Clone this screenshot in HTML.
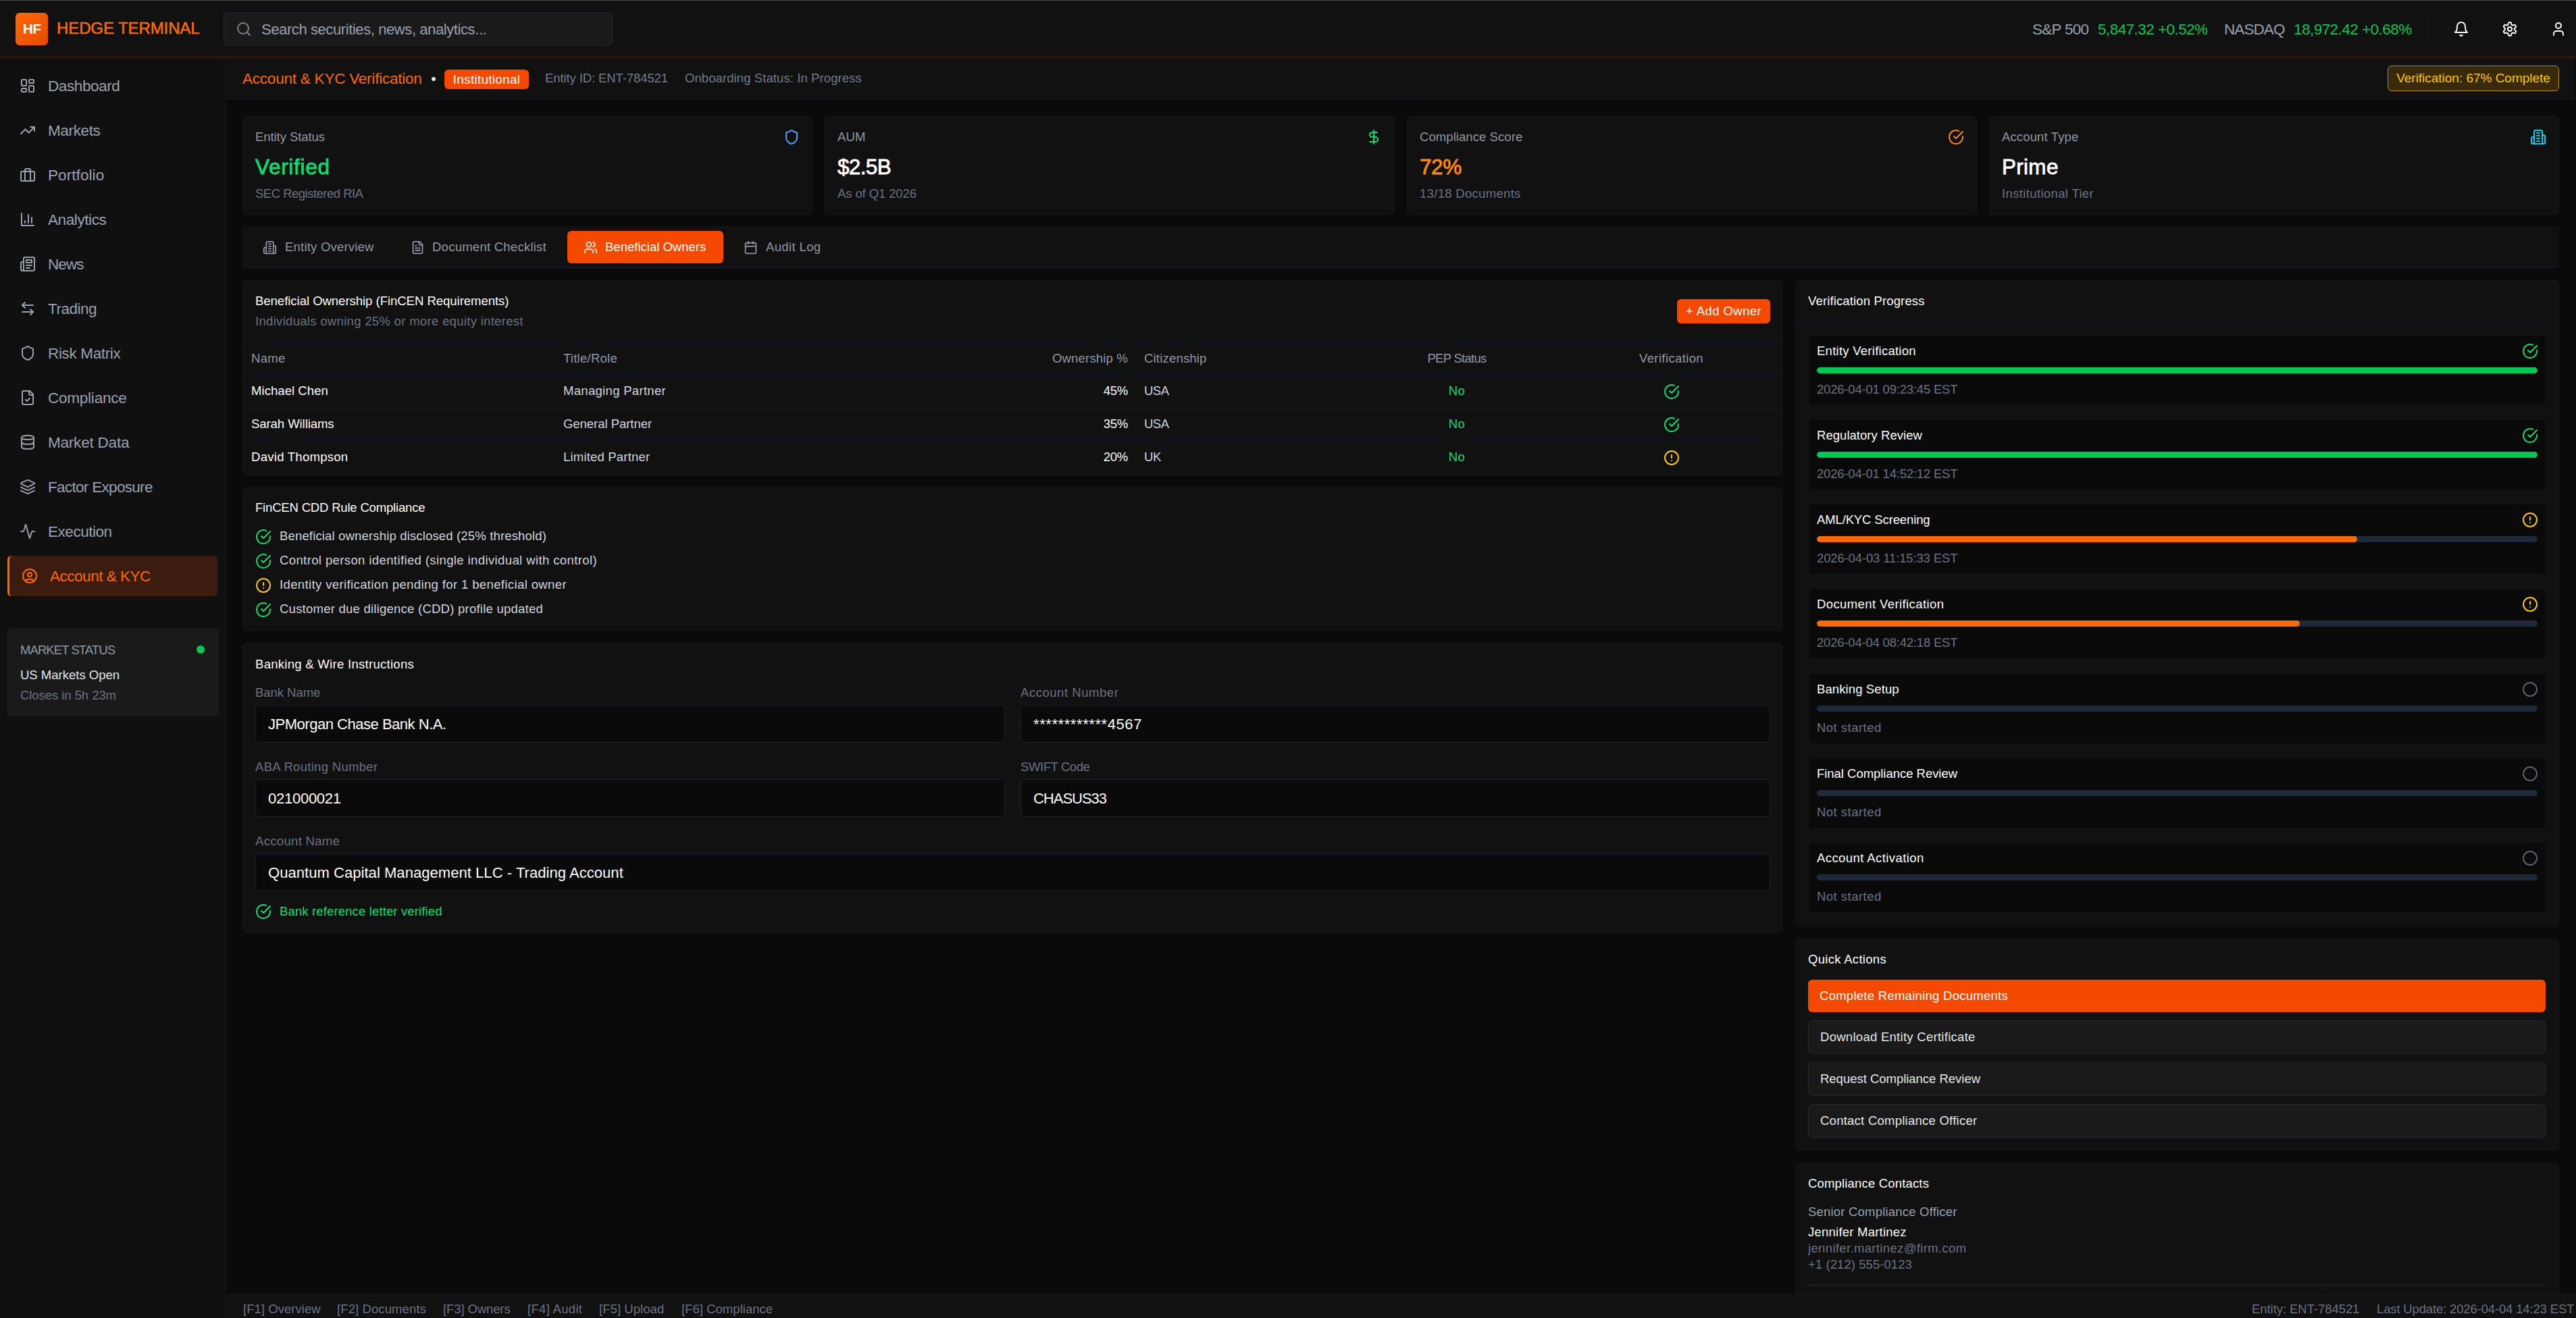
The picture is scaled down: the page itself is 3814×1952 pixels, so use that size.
<!DOCTYPE html>
<html lang="en">
<head>
<meta charset="utf-8">
<title>Hedge Terminal - Account &amp; KYC</title>
<style>
*{box-sizing:border-box;margin:0;padding:0}
html,body{width:3814px;height:1952px;overflow:hidden;background:#0a0a0a}
body{font-family:"Liberation Sans",sans-serif;color:#fff;position:relative;font-size:21px;line-height:1.5;-webkit-font-smoothing:antialiased}
svg{display:block;fill:none;stroke:currentColor;stroke-width:2;stroke-linecap:round;stroke-linejoin:round}
.abs{position:absolute}
.topline{position:absolute;left:0;top:0;width:3814px;height:1px;background:#4b4b4b;z-index:50}
.rstrip{position:absolute;left:3812px;top:85px;width:2px;height:1867px;background:#0a0a0a;z-index:40}

/* header */
#hdr{position:absolute;left:0;top:1px;width:3814px;height:84px;background:#111111;border-bottom:1px solid #55260c}
#logo{position:absolute;left:23px;top:18px;width:48px;height:48px;border-radius:6px;background:linear-gradient(135deg,#ff6900 0%,#e64a00 100%);color:#fff;font-weight:700;font-size:21px;line-height:48px;text-align:center;letter-spacing:-0.5px}
#brand{position:absolute;left:84px;top:21px;font-size:24px;line-height:40px;font-weight:400;-webkit-text-stroke:0.55px #ff6900;color:#ff6900;white-space:nowrap}
#search{position:absolute;left:331px;top:17px;width:576px;height:50px;border:1px solid #252831;border-radius:6px;background:#1a1a1a}
#search svg{position:absolute;left:17px;top:12px;width:24px;height:24px;color:#7b8392}
#search span{position:absolute;left:55px;top:1px;line-height:48px;font-size:22px;color:#99a1af;white-space:nowrap}
.tick{position:absolute;top:22.5px;line-height:40px;font-size:22.5px;white-space:nowrap}
.tl{color:#99a1af}.tg{color:#00c951}
#hdiv{position:absolute;left:3595px;top:24px;width:1px;height:36px;background:#1a1f29}
.hic{position:absolute;top:30px;width:24px;height:24px;color:#fff}

/* sidebar */
#side{position:absolute;left:0;top:85px;width:335px;height:1867px;background:#101010;border-right:1px solid #15161d}
.nav{position:absolute;left:12px;width:311px;height:60px;border-radius:6px;color:#99a1af;font-size:22.5px;line-height:60px;white-space:nowrap}
.nav svg{position:absolute;left:17px;top:18px;width:24px;height:24px}
.nav span{position:absolute;left:59px;top:1px}
.nav.on{left:11px;background:#3b1c0e;color:#ff6900;border-left:3px solid #ff6900}
.nav.on svg{left:18px}
.nav.on span{left:60px}
#mkt{position:absolute;left:11px;top:846px;width:312px;height:129px;border:1px solid #222;border-radius:6px;background:#1a1a1a}
#mkt .a{position:absolute;left:18px;top:17px;font-size:18.5px;line-height:27px;color:#9098a6}
#mkt .b{position:absolute;left:18px;top:54px;font-size:18.5px;line-height:27px;color:#e5e7eb}
#mkt .c{position:absolute;left:18px;top:84px;font-size:18.5px;line-height:27px;color:#6a7282}
#mkt i{position:absolute;left:279px;top:24px;width:12px;height:12px;border-radius:50%;background:#00c951}

/* subheader */
#sub{position:absolute;left:335px;top:85px;width:3477px;height:62px;background:#111111;border-bottom:1px solid #15171e}
#sub .t{position:absolute;left:24px;top:11.5px;line-height:40px;font-size:22.5px;color:#ff6900;white-space:nowrap}
#sub .dot{position:absolute;left:304px;top:29px;width:6px;height:6px;border-radius:50%;background:#e5e7eb}
#sub .bdg{position:absolute;left:323px;top:18px;width:125px;height:29px;border-radius:6px;background:#f54900;color:#fff;font-size:19px;line-height:29px;text-align:center;white-space:nowrap}
#sub .m{position:absolute;top:10.5px;line-height:40px;font-size:18.5px;color:#737b8a;white-space:nowrap}
#sub .vb{position:absolute;left:3200px;top:12px;width:254px;height:38px;border:1px solid #b8860b;border-radius:6px;background:#3a2a0c;color:#fdc700;font-size:19px;line-height:36px;text-align:center;white-space:nowrap}

/* cards */
.card{position:absolute;background:#111111;border:1px solid #16181d;border-radius:6px}
.stat{top:172px;height:146px}
.stat .l{position:absolute;left:18px;top:16px;font-size:18.5px;line-height:28px;color:#9098a6;white-space:nowrap}
.stat .v{position:absolute;left:18px;top:53px;font-size:31.5px;line-height:42px;font-weight:400;-webkit-text-stroke:0.8px currentColor;white-space:nowrap}
.stat .s{position:absolute;left:18px;top:100px;font-size:18.5px;line-height:28px;color:#6a7282;white-space:nowrap}
.stat svg{position:absolute;right:18px;top:18px;width:24px;height:24px}

/* tabs */
#tabs{left:359px;top:335px;width:3430px;height:62px;border:0;border-bottom:1px solid #1a1d26;border-radius:0}
.tab{position:absolute;top:7px;height:48px;border-radius:6px;color:#9098a6;font-size:18.5px;line-height:48px;white-space:nowrap}
.tab svg{position:absolute;left:24px;top:14px;width:21px;height:21px}
.tab span{position:absolute;left:56px;top:0}
.tab.on{background:#f54900;color:#fff}

.ph{font-size:19.5px;line-height:28px;color:#fff;white-space:nowrap}

/* panels */
.pt{position:absolute;font-size:18.5px;line-height:28px;color:#fff;white-space:nowrap}
.psub{position:absolute;font-size:18.5px;line-height:27px;color:#6a7282;white-space:nowrap}
.hr{position:absolute;height:1px;background:#171920}
#addb{position:absolute;left:2123px;top:27px;width:138px;height:36px;border-radius:6px;background:#f54900;color:#fff;font-size:18.5px;line-height:36px;text-align:center;white-space:nowrap}
.th,.td{position:absolute;font-size:18.5px;line-height:28px;white-space:nowrap}
.th{color:#9098a6}
.td{color:#fff}.td.g{color:#d1d5dc}.td.gr{color:#05df72}
.ti{position:absolute;width:24px;height:24px}
.ck{position:absolute;left:18px;width:24px;height:24px}
.cl{position:absolute;left:54px;font-size:18.5px;line-height:28px;color:#d1d5dc;white-space:nowrap}
.lb{position:absolute;font-size:18.5px;line-height:28px;color:#6a7282;white-space:nowrap}
.inp{position:absolute;height:56px;border:1px solid #1c212b;border-radius:6px;background:#0a0a0a;color:#fff;font-size:22px;line-height:56px;padding-left:18px;white-space:nowrap}
/* verification items */
.vi{position:absolute;left:19px;width:1092px;height:105px;border-radius:6px;background:#0a0a0a;border:1px solid #111318}
.vi .n{position:absolute;left:11px;top:9px;font-size:18.5px;line-height:28px;color:#fff;white-space:nowrap}
.vi svg{position:absolute;left:1055px;top:11px;width:24px;height:24px}
.vi .bar{position:absolute;left:11px;top:47px;width:1067px;height:9px;border-radius:5px;background:#1e2939;overflow:hidden}
.vi .bar i{display:block;height:9px;border-radius:5px}
.vi .d{position:absolute;left:11px;top:66px;font-size:18.5px;line-height:27px;color:#6a7282;white-space:nowrap}
.qb{position:absolute;left:18px;width:1092px;border-radius:6px;font-size:18.5px;white-space:nowrap;padding-left:17px}
.qb.p{height:48px;line-height:48px;background:#f54900;color:#fff}
.qb.s{height:50px;line-height:47px;background:#1a1a1a;border:1px solid #23272e;color:#e5e7eb}
#foot{position:absolute;left:335px;top:1917px;width:3479px;height:35px;background:#111111;border-top:1px solid #171a21;z-index:45}
#foot span{position:absolute;top:7px;font-size:18.5px;line-height:27px;color:#6a7282;white-space:nowrap}
u{text-decoration:none}
</style>
</head>
<body>
<div class="topline"></div>
<div class="rstrip"></div>

<!-- HEADER -->
<div id="hdr">
  <div id="logo"><u style="letter-spacing:-0.65px">HF</u></div>
  <div id="brand"><u style="letter-spacing:-0.10px">HEDGE TERMINAL</u></div>
  <div id="search">
    <svg viewBox="0 0 24 24"><circle cx="11" cy="11" r="8"/><path d="m21 21-4.3-4.3"/></svg>
    <span><u style="letter-spacing:-0.41px">Search securities, news, analytics...</u></span>
  </div>
  <div class="tick tl" style="left:3009px"><u style="letter-spacing:-0.72px">S&amp;P 500</u></div>
  <div class="tick tg" style="left:3106px"><u style="letter-spacing:-0.55px">5,847.32 +0.52%</u></div>
  <div class="tick tl" style="left:3293px"><u style="letter-spacing:-0.92px">NASDAQ</u></div>
  <div class="tick tg" style="left:3396px"><u style="letter-spacing:-0.54px">18,972.42 +0.68%</u></div>
  <div id="hdiv"></div>
  <svg class="hic" style="left:3632px" viewBox="0 0 24 24"><path d="M6 8a6 6 0 0 1 12 0c0 7 3 9 3 9H3s3-2 3-9"/><path d="M10.3 21a1.94 1.94 0 0 0 3.4 0"/></svg>
  <svg class="hic" style="left:3704px" viewBox="0 0 24 24"><path d="M12.22 2h-.44a2 2 0 0 0-2 2v.18a2 2 0 0 1-1 1.73l-.43.25a2 2 0 0 1-2 0l-.15-.08a2 2 0 0 0-2.73.73l-.22.38a2 2 0 0 0 .73 2.73l.15.1a2 2 0 0 1 1 1.72v.51a2 2 0 0 1-1 1.74l-.15.09a2 2 0 0 0-.73 2.73l.22.38a2 2 0 0 0 2.73.73l.15-.08a2 2 0 0 1 2 0l.43.25a2 2 0 0 1 1 1.73V20a2 2 0 0 0 2 2h.44a2 2 0 0 0 2-2v-.18a2 2 0 0 1 1-1.73l.43-.25a2 2 0 0 1 2 0l.15.08a2 2 0 0 0 2.73-.73l.22-.39a2 2 0 0 0-.73-2.73l-.15-.08a2 2 0 0 1-1-1.74v-.5a2 2 0 0 1 1-1.74l.15-.09a2 2 0 0 0 .73-2.73l-.22-.38a2 2 0 0 0-2.73-.73l-.15.08a2 2 0 0 1-2 0l-.43-.25a2 2 0 0 1-1-1.73V4a2 2 0 0 0-2-2z"/><circle cx="12" cy="12" r="3"/></svg>
  <svg class="hic" style="left:3776px" viewBox="0 0 24 24"><path d="M19 21v-2a4 4 0 0 0-4-4H9a4 4 0 0 0-4 4v2"/><circle cx="12" cy="7" r="4"/></svg>
</div>

<!-- SIDEBAR -->
<div id="side">
  <div class="nav" style="top:12px"><svg viewBox="0 0 24 24"><rect width="7" height="9" x="3" y="3" rx="1"/><rect width="7" height="5" x="14" y="3" rx="1"/><rect width="7" height="9" x="14" y="12" rx="1"/><rect width="7" height="5" x="3" y="16" rx="1"/></svg><span><u style="letter-spacing:-0.41px">Dashboard</u></span></div>
  <div class="nav" style="top:78px"><svg viewBox="0 0 24 24"><polyline points="22 7 13.5 15.5 8.5 10.5 2 17"/><polyline points="16 7 22 7 22 13"/></svg><span><u style="letter-spacing:-0.37px">Markets</u></span></div>
  <div class="nav" style="top:144px"><svg viewBox="0 0 24 24"><rect width="20" height="14" x="2" y="7" rx="2" ry="2"/><path d="M16 21V5a2 2 0 0 0-2-2h-4a2 2 0 0 0-2 2v16"/></svg><span><u style="letter-spacing:0.08px">Portfolio</u></span></div>
  <div class="nav" style="top:210px"><svg viewBox="0 0 24 24"><path d="M3 3v18h18"/><path d="M18 17V9"/><path d="M13 17V5"/><path d="M8 17v-3"/></svg><span><u style="letter-spacing:-0.41px">Analytics</u></span></div>
  <div class="nav" style="top:276px"><svg viewBox="0 0 24 24"><path d="M4 22h16a2 2 0 0 0 2-2V4a2 2 0 0 0-2-2H8a2 2 0 0 0-2 2v16a2 2 0 0 1-2 2Zm0 0a2 2 0 0 1-2-2v-9c0-1.1.9-2 2-2h2"/><path d="M18 14h-8"/><path d="M15 18h-5"/><path d="M10 6h8v4h-8V6Z"/></svg><span><u style="letter-spacing:-0.94px">News</u></span></div>
  <div class="nav" style="top:342px"><svg viewBox="0 0 24 24"><path d="M8 3 4 7l4 4"/><path d="M4 7h16"/><path d="m16 21 4-4-4-4"/><path d="M20 17H4"/></svg><span><u style="letter-spacing:-0.50px">Trading</u></span></div>
  <div class="nav" style="top:408px"><svg viewBox="0 0 24 24"><path d="M20 13c0 5-3.5 7.5-7.66 8.95a1 1 0 0 1-.67-.01C7.5 20.5 4 18 4 13V6a1 1 0 0 1 1-1c2 0 4.5-1.2 6.24-2.72a1.17 1.17 0 0 1 1.52 0C14.51 3.81 17 5 19 5a1 1 0 0 1 1 1z"/></svg><span><u style="letter-spacing:-0.35px">Risk Matrix</u></span></div>
  <div class="nav" style="top:474px"><svg viewBox="0 0 24 24"><path d="M15 2H6a2 2 0 0 0-2 2v16a2 2 0 0 0 2 2h12a2 2 0 0 0 2-2V7Z"/><path d="M14 2v4a2 2 0 0 0 2 2h4"/><path d="m9 15 2 2 4-4"/></svg><span><u style="letter-spacing:-0.23px">Compliance</u></span></div>
  <div class="nav" style="top:540px"><svg viewBox="0 0 24 24"><ellipse cx="12" cy="5" rx="9" ry="3"/><path d="M3 5V19A9 3 0 0 0 21 19V5"/><path d="M3 12A9 3 0 0 0 21 12"/></svg><span><u style="letter-spacing:-0.21px">Market Data</u></span></div>
  <div class="nav" style="top:606px"><svg viewBox="0 0 24 24"><path d="m12.83 2.18a2 2 0 0 0-1.66 0L2.6 6.08a1 1 0 0 0 0 1.83l8.58 3.91a2 2 0 0 0 1.66 0l8.58-3.9a1 1 0 0 0 0-1.83Z"/><path d="m22 17.65-9.17 4.16a2 2 0 0 1-1.66 0L2 17.65"/><path d="m22 12.65-9.17 4.16a2 2 0 0 1-1.66 0L2 12.65"/></svg><span><u style="letter-spacing:-0.69px">Factor Exposure</u></span></div>
  <div class="nav" style="top:672px"><svg viewBox="0 0 24 24"><path d="M22 12h-2.48a2 2 0 0 0-1.93 1.46l-2.35 8.36a.25.25 0 0 1-.48 0L9.24 2.18a.25.25 0 0 0-.48 0l-2.35 8.36A2 2 0 0 1 4.49 12H2"/></svg><span><u style="letter-spacing:-0.46px">Execution</u></span></div>
  <div class="nav on" style="top:738px"><svg viewBox="0 0 24 24"><circle cx="12" cy="12" r="10"/><circle cx="12" cy="10" r="3"/><path d="M7 20.662V19a2 2 0 0 1 2-2h6a2 2 0 0 1 2 2v1.662"/></svg><span><u style="letter-spacing:-0.48px">Account &amp; KYC</u></span></div>
  <div id="mkt"><div class="a"><u style="letter-spacing:-0.93px">MARKET STATUS</u></div><i></i><div class="b"><u style="letter-spacing:-0.00px">US Markets Open</u></div><div class="c"><u style="letter-spacing:-0.06px">Closes in 5h 23m</u></div></div>
</div>


<div id="sub">
  <div class="t"><u style="letter-spacing:-0.22px">Account &amp; KYC Verification</u></div>
  <div class="dot"></div>
  <div class="bdg"><u style="letter-spacing:0.26px">Institutional</u></div>
  <div class="m" style="left:472px"><u style="letter-spacing:-0.10px">Entity ID: ENT-784521</u></div>
  <div class="m" style="left:679px"><u style="letter-spacing:0.09px">Onboarding Status: In Progress</u></div>
  <div class="vb"><u style="letter-spacing:-0.02px">Verification: 67% Complete</u></div>
</div>

<div class="card stat" style="left:359px;width:844px">
  <div class="l"><u style="letter-spacing:-0.07px">Entity Status</u></div><div class="v" style="color:#05df72"><u style="letter-spacing:0.69px">Verified</u></div><div class="s"><u style="letter-spacing:-0.51px">SEC Registered RIA</u></div>
  <svg viewBox="0 0 24 24" style="color:#51a2ff"><path d="M20 13c0 5-3.5 7.5-7.66 8.95a1 1 0 0 1-.67-.01C7.5 20.5 4 18 4 13V6a1 1 0 0 1 1-1c2 0 4.5-1.2 6.24-2.72a1.17 1.17 0 0 1 1.52 0C14.51 3.81 17 5 19 5a1 1 0 0 1 1 1z"/></svg>
</div>
<div class="card stat" style="left:1221px;width:844px">
  <div class="l"><u style="letter-spacing:0.12px">AUM</u></div><div class="v"><u style="letter-spacing:-0.67px">$2.5B</u></div><div class="s"><u style="letter-spacing:-0.11px">As of Q1 2026</u></div>
  <svg viewBox="0 0 24 24" style="color:#05df72"><line x1="12" x2="12" y1="2" y2="22"/><path d="M17 5H9.5a3.5 3.5 0 0 0 0 7h5a3.5 3.5 0 0 1 0 7H6"/></svg>
</div>
<div class="card stat" style="left:2083px;width:844px">
  <div class="l"><u style="letter-spacing:0.07px">Compliance Score</u></div><div class="v" style="color:#ff8904"><u style="letter-spacing:-0.42px">72%</u></div><div class="s"><u style="letter-spacing:0.31px">13/18 Documents</u></div>
  <svg viewBox="0 0 24 24" style="color:#ff8904"><path d="M22 11.08V12a10 10 0 1 1-5.93-9.14"/><path d="m9 11 3 3L22 4"/></svg>
</div>
<div class="card stat" style="left:2945px;width:844px">
  <div class="l"><u style="letter-spacing:0.14px">Account Type</u></div><div class="v"><u style="letter-spacing:0.29px">Prime</u></div><div class="s"><u style="letter-spacing:0.36px">Institutional Tier</u></div>
  <svg viewBox="0 0 24 24" style="color:#00d3f2"><path d="M6 22V4a2 2 0 0 1 2-2h8a2 2 0 0 1 2 2v18Z"/><path d="M6 12H4a2 2 0 0 0-2 2v6a2 2 0 0 0 2 2h2"/><path d="M18 9h2a2 2 0 0 1 2 2v9a2 2 0 0 1-2 2h-2"/><path d="M10 6h4"/><path d="M10 10h4"/><path d="M10 14h4"/><path d="M10 18h4"/></svg>
</div>

<div class="card" id="tabs">
  <div class="tab" style="left:7px;width:212px"><svg viewBox="0 0 24 24" style="left:23px"><path d="M6 22V4a2 2 0 0 1 2-2h8a2 2 0 0 1 2 2v18Z"/><path d="M6 12H4a2 2 0 0 0-2 2v6a2 2 0 0 0 2 2h2"/><path d="M18 9h2a2 2 0 0 1 2 2v9a2 2 0 0 1-2 2h-2"/><path d="M10 6h4"/><path d="M10 10h4"/><path d="M10 14h4"/><path d="M10 18h4"/></svg><span><u style="letter-spacing:0.21px">Entity Overview</u></span></div>
  <div class="tab" style="left:225px;width:251px"><svg viewBox="0 0 24 24"><path d="M15 2H6a2 2 0 0 0-2 2v16a2 2 0 0 0 2 2h12a2 2 0 0 0 2-2V7Z"/><path d="M14 2v4a2 2 0 0 0 2 2h4"/><path d="M10 9H8"/><path d="M16 13H8"/><path d="M16 17H8"/></svg><span><u style="letter-spacing:0.25px">Document Checklist</u></span></div>
  <div class="tab on" style="left:481px;width:231px"><svg viewBox="0 0 24 24"><path d="M16 21v-2a4 4 0 0 0-4-4H6a4 4 0 0 0-4 4v2"/><circle cx="9" cy="7" r="4"/><path d="M22 21v-2a4 4 0 0 0-3-3.87"/><path d="M16 3.13a4 4 0 0 1 0 7.75"/></svg><span><u style="letter-spacing:0.01px">Beneficial Owners</u></span></div>
  <div class="tab" style="left:718px;width:164px"><svg viewBox="0 0 24 24"><path d="M8 2v4"/><path d="M16 2v4"/><rect width="18" height="18" x="3" y="4" rx="2"/><path d="M3 10h18"/></svg><span style="left:57px"><u style="letter-spacing:0.37px">Audit Log</u></span></div>
</div>
<div class="card" id="p1" style="left:359px;top:415px;width:2280px;height:289px">
<div class="pt" style="left:18px;top:16px"><u style="letter-spacing:-0.02px">Beneficial Ownership (FinCEN Requirements)</u></div>
<div class="psub" style="left:18px;top:46px"><u style="letter-spacing:0.31px">Individuals owning 25% or more equity interest</u></div>
<div id="addb"><u style="letter-spacing:0.41px">+ Add Owner</u></div>
<div class="hr" style="left:0;top:90px;width:2278px"></div>
<div class="th" style="left:12px;top:101px"><u style="letter-spacing:0.29px">Name</u></div>
<div class="th" style="left:474px;top:101px"><u style="letter-spacing:0.25px">Title/Role</u></div>
<div class="th" style="right:968px;top:101px"><u style="letter-spacing:0.18px">Ownership %</u></div>
<div class="th" style="left:1334px;top:101px"><u style="letter-spacing:0.19px">Citizenship</u></div>
<div class="th" style="left:1643px;width:308px;text-align:center;top:101px"><u style="letter-spacing:-0.73px">PEP Status</u></div>
<div class="th" style="left:1951px;width:327px;text-align:center;top:101px"><u style="letter-spacing:0.38px">Verification</u></div>
<div class="hr" style="left:0;top:138px;width:2278px"></div>
<div class="td" style="left:12px;top:149px"><u style="letter-spacing:0.06px">Michael Chen</u></div>
<div class="td g" style="left:474px;top:149px"><u style="letter-spacing:0.31px">Managing Partner</u></div>
<div class="td" style="right:968px;top:149px"><u style="letter-spacing:-0.24px">45%</u></div>
<div class="td g" style="left:1334px;top:149px"><u style="letter-spacing:-0.52px">USA</u></div>
<div class="td gr" style="left:1643px;width:308px;text-align:center;top:149px"><u style="letter-spacing:0.52px">No</u></div>
<svg class="ti" viewBox="0 0 24 24" style="color:#05df72;left:2103px;top:152px"><path d="M22 11.08V12a10 10 0 1 1-5.93-9.14"/><path d="m9 11 3 3L22 4"/></svg>
<div class="hr" style="left:0;top:189px;width:2278px"></div>
<div class="td" style="left:12px;top:198px"><u style="letter-spacing:-0.06px">Sarah Williams</u></div>
<div class="td g" style="left:474px;top:198px"><u style="letter-spacing:-0.04px">General Partner</u></div>
<div class="td" style="right:968px;top:198px"><u style="letter-spacing:-0.24px">35%</u></div>
<div class="td g" style="left:1334px;top:198px"><u style="letter-spacing:-0.52px">USA</u></div>
<div class="td gr" style="left:1643px;width:308px;text-align:center;top:198px"><u style="letter-spacing:0.52px">No</u></div>
<svg class="ti" viewBox="0 0 24 24" style="color:#05df72;left:2103px;top:201px"><path d="M22 11.08V12a10 10 0 1 1-5.93-9.14"/><path d="m9 11 3 3L22 4"/></svg>
<div class="hr" style="left:0;top:238px;width:2278px"></div>
<div class="td" style="left:12px;top:247px"><u style="letter-spacing:0.28px">David Thompson</u></div>
<div class="td g" style="left:474px;top:247px"><u style="letter-spacing:0.19px">Limited Partner</u></div>
<div class="td" style="right:968px;top:247px"><u style="letter-spacing:-0.24px">20%</u></div>
<div class="td g" style="left:1334px;top:247px"><u style="letter-spacing:-0.40px">UK</u></div>
<div class="td gr" style="left:1643px;width:308px;text-align:center;top:247px"><u style="letter-spacing:0.52px">No</u></div>
<svg class="ti" viewBox="0 0 24 24" style="color:#fdc700;left:2103px;top:250px"><circle cx="12" cy="12" r="10"/><line x1="12" x2="12" y1="8" y2="12"/><line x1="12" x2="12.01" y1="16" y2="16"/></svg>
</div>
<div class="card" id="p2" style="left:359px;top:722px;width:2280px;height:212px">
<div class="pt" style="left:18px;top:15px"><u style="letter-spacing:-0.18px">FinCEN CDD Rule Compliance</u></div>
<svg class="ck" viewBox="0 0 24 24" style="color:#05df72;top:60px"><path d="M22 11.08V12a10 10 0 1 1-5.93-9.14"/><path d="m9 11 3 3L22 4"/></svg>
<div class="cl" style="top:57px"><u style="letter-spacing:0.16px">Beneficial ownership disclosed (25% threshold)</u></div>
<svg class="ck" viewBox="0 0 24 24" style="color:#05df72;top:96px"><path d="M22 11.08V12a10 10 0 1 1-5.93-9.14"/><path d="m9 11 3 3L22 4"/></svg>
<div class="cl" style="top:93px"><u style="letter-spacing:0.39px">Control person identified (single individual with control)</u></div>
<svg class="ck" viewBox="0 0 24 24" style="color:#fdc700;top:132px"><circle cx="12" cy="12" r="10"/><line x1="12" x2="12" y1="8" y2="12"/><line x1="12" x2="12.01" y1="16" y2="16"/></svg>
<div class="cl" style="top:129px"><u style="letter-spacing:0.38px">Identity verification pending for 1 beneficial owner</u></div>
<svg class="ck" viewBox="0 0 24 24" style="color:#05df72;top:168px"><path d="M22 11.08V12a10 10 0 1 1-5.93-9.14"/><path d="m9 11 3 3L22 4"/></svg>
<div class="cl" style="top:165px"><u style="letter-spacing:0.24px">Customer due diligence (CDD) profile updated</u></div>
</div>
<div class="card" id="p3" style="left:359px;top:952px;width:2280px;height:429px">
<div class="pt" style="left:18px;top:17px"><u style="letter-spacing:0.29px">Banking &amp; Wire Instructions</u></div>
<div class="lb" style="left:18px;top:59px"><u style="letter-spacing:-0.04px">Bank Name</u></div>
<div class="lb" style="left:1151px;top:59px"><u style="letter-spacing:0.54px">Account Number</u></div>
<div class="inp" style="left:18px;top:91px;width:1110px"><u style="letter-spacing:-0.48px">JPMorgan Chase Bank N.A.</u></div>
<div class="inp" style="left:1151px;top:91px;width:1110px"><u style="letter-spacing:0.58px">************4567</u></div>
<div class="lb" style="left:18px;top:169px"><u style="letter-spacing:0.31px">ABA Routing Number</u></div>
<div class="lb" style="left:1151px;top:169px"><u style="letter-spacing:-0.41px">SWIFT Code</u></div>
<div class="inp" style="left:18px;top:201px;width:1110px"><u style="letter-spacing:-0.26px">021000021</u></div>
<div class="inp" style="left:1151px;top:201px;width:1110px"><u style="letter-spacing:-1.02px">CHASUS33</u></div>
<div class="lb" style="left:18px;top:279px"><u style="letter-spacing:0.32px">Account Name</u></div>
<div class="inp" style="left:18px;top:311px;width:2243px"><u style="letter-spacing:0.05px">Quantum Capital Management LLC - Trading Account</u></div>
<svg class="ck" viewBox="0 0 24 24" style="color:#05df72;top:385px"><path d="M22 11.08V12a10 10 0 1 1-5.93-9.14"/><path d="m9 11 3 3L22 4"/></svg>
<div class="cl" style="top:383px;color:#05df72"><u style="letter-spacing:0.14px">Bank reference letter verified</u></div>
</div>
<div class="card" id="pa" style="left:2658px;top:415px;width:1131px;height:957px">
<div class="pt" style="left:18px;top:16px"><u style="letter-spacing:0.14px">Verification Progress</u></div>
<div class="hr" style="left:0;top:62px;width:1129px"></div>
<div class="vi" style="top:80px"><div class="n"><u style="letter-spacing:0.26px">Entity Verification</u></div><svg class="" viewBox="0 0 24 24" style="color:#05df72;"><path d="M22 11.08V12a10 10 0 1 1-5.93-9.14"/><path d="m9 11 3 3L22 4"/></svg><div class="bar"><i style="width:100%;background:#00c951"></i></div><div class="d"><u style="letter-spacing:-0.20px">2026-04-01 09:23:45 EST</u></div></div>
<div class="vi" style="top:205px"><div class="n"><u style="letter-spacing:0.04px">Regulatory Review</u></div><svg class="" viewBox="0 0 24 24" style="color:#05df72;"><path d="M22 11.08V12a10 10 0 1 1-5.93-9.14"/><path d="m9 11 3 3L22 4"/></svg><div class="bar"><i style="width:100%;background:#00c951"></i></div><div class="d"><u style="letter-spacing:-0.20px">2026-04-01 14:52:12 EST</u></div></div>
<div class="vi" style="top:330px"><div class="n"><u style="letter-spacing:-0.13px">AML/KYC Screening</u></div><svg class="" viewBox="0 0 24 24" style="color:#fdc700;"><circle cx="12" cy="12" r="10"/><line x1="12" x2="12" y1="8" y2="12"/><line x1="12" x2="12.01" y1="16" y2="16"/></svg><div class="bar"><i style="width:75%;background:#ff6900"></i></div><div class="d"><u style="letter-spacing:-0.14px">2026-04-03 11:15:33 EST</u></div></div>
<div class="vi" style="top:455px"><div class="n"><u style="letter-spacing:0.40px">Document Verification</u></div><svg class="" viewBox="0 0 24 24" style="color:#fdc700;"><circle cx="12" cy="12" r="10"/><line x1="12" x2="12" y1="8" y2="12"/><line x1="12" x2="12.01" y1="16" y2="16"/></svg><div class="bar"><i style="width:67%;background:#ff6900"></i></div><div class="d"><u style="letter-spacing:-0.20px">2026-04-04 08:42:18 EST</u></div></div>
<div class="vi" style="top:581px"><div class="n"><u style="letter-spacing:0.11px">Banking Setup</u></div><svg class="" viewBox="0 0 24 24" style="color:#586272;"><circle cx="12" cy="12" r="10"/></svg><div class="bar"><i style="width:0%;background:#00c951"></i></div><div class="d"><u style="letter-spacing:0.48px">Not started</u></div></div>
<div class="vi" style="top:706px"><div class="n"><u style="letter-spacing:-0.03px">Final Compliance Review</u></div><svg class="" viewBox="0 0 24 24" style="color:#586272;"><circle cx="12" cy="12" r="10"/></svg><div class="bar"><i style="width:0%;background:#00c951"></i></div><div class="d"><u style="letter-spacing:0.48px">Not started</u></div></div>
<div class="vi" style="top:831px"><div class="n"><u style="letter-spacing:0.42px">Account Activation</u></div><svg class="" viewBox="0 0 24 24" style="color:#586272;"><circle cx="12" cy="12" r="10"/></svg><div class="bar"><i style="width:0%;background:#00c951"></i></div><div class="d"><u style="letter-spacing:0.48px">Not started</u></div></div>
</div>
<div class="card" id="pb" style="left:2658px;top:1390px;width:1131px;height:314px">
<div class="pt" style="left:18px;top:16px"><u style="letter-spacing:0.30px">Quick Actions</u></div>
<div class="qb p" style="top:60px"><u style="letter-spacing:0.27px">Complete Remaining Documents</u></div>
<div class="qb s" style="top:120px"><u style="letter-spacing:0.28px">Download Entity Certificate</u></div>
<div class="qb s" style="top:182px"><u style="letter-spacing:-0.02px">Request Compliance Review</u></div>
<div class="qb s" style="top:244px"><u style="letter-spacing:0.25px">Contact Compliance Officer</u></div>
</div>
<div class="card" id="pc" style="left:2658px;top:1722px;width:1131px;height:400px">
<div class="pt" style="left:18px;top:16px"><u style="letter-spacing:0.17px">Compliance Contacts</u></div>
<div class="lb" style="left:18px;top:58px;color:#99a1af"><u style="letter-spacing:0.20px">Senior Compliance Officer</u></div>
<div class="pt" style="left:18px;top:88px"><u style="letter-spacing:0.23px">Jennifer Martinez</u></div>
<div class="lb" style="left:18px;top:112px"><u style="letter-spacing:0.35px">jennifer.martinez@firm.com</u></div>
<div class="lb" style="left:18px;top:136px"><u style="letter-spacing:0.07px">+1 (212) 555-0123</u></div>
<div class="hr" style="left:18px;top:180px;width:1093px;background:#262a35"></div>
</div>
<div id="foot">
<span style="left:25px"><u style="letter-spacing:0.04px">[F1] Overview</u></span><span style="left:164px"><u style="letter-spacing:0.10px">[F2] Documents</u></span><span style="left:321px"><u style="letter-spacing:-0.11px">[F3] Owners</u></span><span style="left:446px"><u style="letter-spacing:0.31px">[F4] Audit</u></span><span style="left:552px"><u style="letter-spacing:0.06px">[F5] Upload</u></span><span style="left:674px"><u style="letter-spacing:0.03px">[F6] Compliance</u></span>
<span style="left:2999px"><u style="letter-spacing:-0.06px">Entity: ENT-784521</u></span><span style="left:3184px"><u style="letter-spacing:-0.15px">Last Update: 2026-04-04 14:23 EST</u></span>
</div>


</body>
</html>
